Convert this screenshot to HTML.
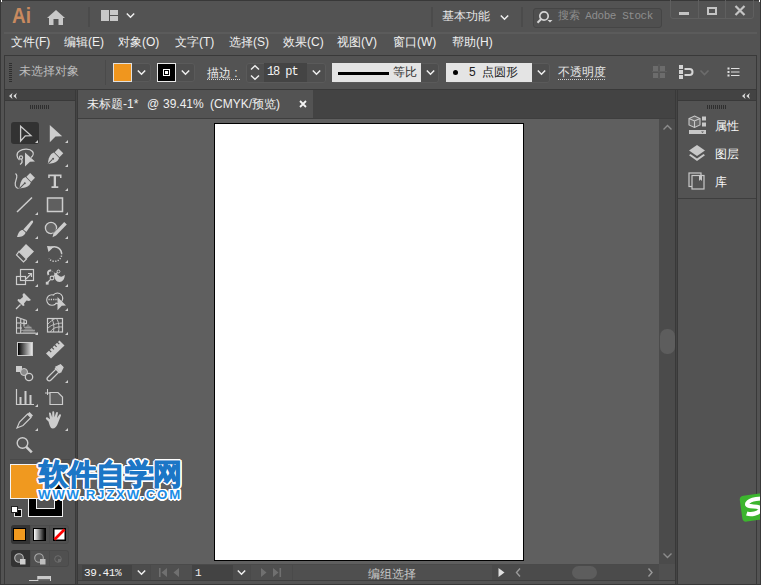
<!DOCTYPE html>
<html><head><meta charset="utf-8">
<style>
*{margin:0;padding:0;box-sizing:border-box}
html,body{width:761px;height:585px;overflow:hidden;background:#535353}
body{position:relative;font-family:"Liberation Sans",sans-serif;color:#e6e6e6}
.a{position:absolute}
.t{position:absolute;white-space:nowrap;font-size:12px;line-height:14px}
</style></head><body>
<!-- window frame -->
<div class="a" style="left:0;top:0;width:761px;height:585px;background:#535353"></div>


<div class="a" style="left:0;top:0;width:761px;height:1px;background:#383838"></div><div class="a" style="left:0;top:0;width:2px;height:2px;background:#fff"></div><div class="a" style="left:759px;top:0;width:2px;height:2px;background:#fff"></div>
<!-- title bar -->
<div class="t" style="left:12px;top:4px;font-size:22px;line-height:23px;font-weight:bold;color:#c88a5f;transform:scaleX(0.86);transform-origin:left">Ai</div>
<svg class="a" style="left:46px;top:9px" width="20" height="17" viewBox="0 0 20 17"><path d="M1 9 L10 1 L19 9 L17 9 L17 16 L12.5 16 L12.5 10 L7.5 10 L7.5 16 L3 16 L3 9 Z" fill="#c8c8c8"/></svg>
<div class="a" style="left:88px;top:7px;width:2px;height:20px;background:#4b4b4b"></div>
<div class="a" style="left:101px;top:10px;width:8px;height:11px;background:#c8c8c8"></div>
<div class="a" style="left:110px;top:10px;width:8px;height:5px;background:#c8c8c8"></div>
<div class="a" style="left:110px;top:16px;width:8px;height:5px;background:#c8c8c8"></div>
<svg class="a" style="left:125px;top:12px" width="11" height="7" viewBox="0 0 11 7"><path d="M1.8 1.5 L5.5 5.2 L9.2 1.5" fill="none" stroke="#f0f0f0" stroke-width="1.5"/></svg>
<div class="a" style="left:431px;top:7px;width:2px;height:20px;background:#4b4b4b"></div>
<div class="t" style="left:442px;top:9px;font-size:12px;color:#e8e8e8">基本功能</div>
<svg class="a" style="left:499px;top:14px" width="11" height="7" viewBox="0 0 11 7"><path d="M1.8 1.5 L5.5 5.2 L9.2 1.5" fill="none" stroke="#f0f0f0" stroke-width="1.5"/></svg>
<div class="a" style="left:521px;top:7px;width:2px;height:20px;background:#4b4b4b"></div>
<div class="a" style="left:533px;top:8px;width:129px;height:20px;border:1px solid #454545;border-radius:3px;background:#4f4f4f"></div>
<svg class="a" style="left:535px;top:9px" width="20" height="16" viewBox="0 0 20 16"><circle cx="9" cy="7" r="4.2" fill="none" stroke="#d4d4d4" stroke-width="1.7"/><path d="M6.2 10 L2.5 13.8" stroke="#d4d4d4" stroke-width="2"/><path d="M12.5 11 L17.5 11 L15 13.5Z" fill="#d4d4d4"/></svg>
<div class="t" style="left:558px;top:9px;font-size:11px;letter-spacing:-0.45px;color:#8e8e8e;font-family:'Liberation Mono',monospace">搜索 Adobe Stock</div>
<div class="a" style="left:670px;top:-3px;width:84px;height:22px;border:1px solid #5f5f5f;border-radius:3px"></div>
<div class="a" style="left:698px;top:0;width:1px;height:19px;background:#5f5f5f"></div>
<div class="a" style="left:725px;top:0;width:1px;height:19px;background:#5f5f5f"></div>
<div class="a" style="left:679px;top:12px;width:10px;height:3px;background:#c4c4c4"></div>
<div class="a" style="left:707px;top:7px;width:10px;height:8px;border:2px solid #c4c4c4"></div>
<svg class="a" style="left:734px;top:5px" width="12" height="11" viewBox="0 0 12 11"><path d="M1.5 1 L10.5 10 M10.5 1 L1.5 10" stroke="#c4c4c4" stroke-width="2.2"/></svg>
<div class="a" style="left:4px;top:32px;width:753px;height:2px;background:#5b5b5b"></div>
<!-- menu -->
<div class="t" style="left:11px;top:35px;color:#f0f0f0">文件(F)</div>
<div class="t" style="left:64px;top:35px;color:#f0f0f0">编辑(E)</div>
<div class="t" style="left:118px;top:35px;color:#f0f0f0">对象(O)</div>
<div class="t" style="left:175px;top:35px;color:#f0f0f0">文字(T)</div>
<div class="t" style="left:229px;top:35px;color:#f0f0f0">选择(S)</div>
<div class="t" style="left:283px;top:35px;color:#f0f0f0">效果(C)</div>
<div class="t" style="left:337px;top:35px;color:#f0f0f0">视图(V)</div>
<div class="t" style="left:393px;top:35px;color:#f0f0f0">窗口(W)</div>
<div class="t" style="left:452px;top:35px;color:#f0f0f0">帮助(H)</div>
<!-- control bar -->
<div class="a" style="left:4px;top:55px;width:753px;height:35px;border:1px solid #393939;background:#535353"></div>
<div class="a" style="left:9px;top:63px;width:3px;height:20px;background:repeating-linear-gradient(#2e2e2e 0 1px,transparent 1px 2px)"></div>
<div class="t" style="left:19px;top:64px;color:#bdbdbd">未选择对象</div>
<div class="a" style="left:105px;top:60px;width:1px;height:25px;background:#4a4a4a"></div>
<div class="a" style="left:113px;top:63px;width:38px;height:19px;border-radius:3px;background:#4e4e4e;border:1px solid #5a5a5a"></div>
<div class="a" style="left:113px;top:63px;width:19px;height:19px;background:#f0961e;border:1px solid #e0e0e0"></div>
<svg class="a" style="left:136px;top:69px" width="11" height="7" viewBox="0 0 11 7"><path d="M1.8 1.5 L5.5 5.2 L9.2 1.5" fill="none" stroke="#f0f0f0" stroke-width="1.5"/></svg>
<div class="a" style="left:157px;top:63px;width:38px;height:19px;border-radius:3px;background:#4e4e4e;border:1px solid #5a5a5a"></div>
<div class="a" style="left:157px;top:63px;width:19px;height:19px;background:#000;border:1px solid #e8e8e8"></div>
<div class="a" style="left:163px;top:69px;width:7px;height:7px;border:1px solid #fff"></div>
<div class="a" style="left:165px;top:71px;width:3px;height:3px;background:#fff"></div>
<svg class="a" style="left:180px;top:69px" width="11" height="7" viewBox="0 0 11 7"><path d="M1.8 1.5 L5.5 5.2 L9.2 1.5" fill="none" stroke="#f0f0f0" stroke-width="1.5"/></svg>
<div class="t" style="left:207px;top:66px;color:#ececec">描边 :</div>
<div class="a" style="left:207px;top:79px;width:34px;height:1px;background:repeating-linear-gradient(90deg,#cfcfcf 0 1px,transparent 1px 2px)"></div>
<div class="a" style="left:246px;top:63px;width:80px;height:20px;border-radius:3px;background:#4e4e4e;border:1px solid #5a5a5a"></div>
<div class="a" style="left:264px;top:63px;width:43px;height:19px;background:#444"></div>
<svg class="a" style="left:249px;top:64px" width="12" height="17" viewBox="0 0 12 17"><path d="M2 5.5 L6 1.8 L10 5.5 M2 11.5 L6 15.2 L10 11.5" fill="none" stroke="#eee" stroke-width="1.5"/></svg>
<div class="t" style="left:267px;top:65px;font-family:'Liberation Mono',monospace;font-size:12px;letter-spacing:-1.1px;color:#f4f4f4">18 pt</div>
<svg class="a" style="left:311px;top:69px" width="11" height="7" viewBox="0 0 11 7"><path d="M1.8 1.5 L5.5 5.2 L9.2 1.5" fill="none" stroke="#f0f0f0" stroke-width="1.5"/></svg>
<div class="a" style="left:332px;top:63px;width:107px;height:20px;border-radius:3px;background:#4e4e4e;border:1px solid #5a5a5a"></div>
<div class="a" style="left:332px;top:63px;width:89px;height:19px;background:#e4e4e4"></div>
<div class="a" style="left:338px;top:72px;width:51px;height:3px;background:#000"></div>
<div class="t" style="left:393px;top:65px;color:#303030">等比</div>
<svg class="a" style="left:425px;top:69px" width="11" height="7" viewBox="0 0 11 7"><path d="M1.8 1.5 L5.5 5.2 L9.2 1.5" fill="none" stroke="#f0f0f0" stroke-width="1.5"/></svg>
<div class="a" style="left:446px;top:63px;width:104px;height:20px;border-radius:3px;background:#4e4e4e;border:1px solid #5a5a5a"></div>
<div class="a" style="left:446px;top:63px;width:86px;height:19px;background:#e4e4e4"></div>
<div class="a" style="left:453px;top:70px;width:5px;height:5px;border-radius:50%;background:#000"></div>
<div class="t" style="left:469px;top:65px;color:#202020">5 &nbsp;点圆形</div>
<svg class="a" style="left:536px;top:69px" width="11" height="7" viewBox="0 0 11 7"><path d="M1.8 1.5 L5.5 5.2 L9.2 1.5" fill="none" stroke="#f0f0f0" stroke-width="1.5"/></svg>
<div class="t" style="left:558px;top:65px;color:#e6e6e6">不透明度</div>
<div class="a" style="left:558px;top:79px;width:48px;height:1px;background:repeating-linear-gradient(90deg,#cfcfcf 0 1px,transparent 1px 2px)"></div>
<svg class="a" style="left:652px;top:64px" width="15" height="15" viewBox="0 0 15 15"><rect x="1" y="2" width="5" height="5" fill="#6c6c6c"/><rect x="8" y="2" width="5" height="5" fill="#6c6c6c"/><rect x="1" y="9" width="5" height="5" fill="#6c6c6c"/><rect x="8" y="9" width="5" height="5" fill="#6c6c6c"/><path d="M7 0 V15 M0 7.5 H15" stroke="#5e5e5e" stroke-width="1"/></svg>
<svg class="a" style="left:678px;top:64px" width="18" height="16" viewBox="0 0 18 16"><rect x="1" y="1" width="4" height="4" fill="#d4d4d4"/><rect x="1" y="6" width="4" height="4" fill="#d4d4d4"/><rect x="1" y="11" width="4" height="4" fill="#d4d4d4"/><path d="M6.5 5 H11.5 A3 3 0 0 1 11.5 11 H6.5" fill="none" stroke="#d4d4d4" stroke-width="2"/></svg>
<svg class="a" style="left:699px;top:69px" width="11" height="7" viewBox="0 0 11 7"><path d="M1.5 1.5 L5.5 5.5 L9.5 1.5" fill="none" stroke="#6c6c6c" stroke-width="1.6"/></svg>
<svg class="a" style="left:727px;top:67px" width="13" height="10" viewBox="0 0 13 10"><rect x="0.5" y="0.5" width="2" height="2" fill="#e0e0e0"/><rect x="0.5" y="4" width="2" height="2" fill="#e0e0e0"/><rect x="0.5" y="7.5" width="2" height="2" fill="#e0e0e0"/><path d="M4 1.5 H12.5 M4 5 H12.5 M4 8.5 H12.5" stroke="#e0e0e0" stroke-width="1.2"/></svg>
<!-- left panel -->
<div class="a" style="left:4px;top:90px;width:72px;height:494px;background:#535353;border-left:1px solid #3a3a3a;border-right:1px solid #393939"></div>
<div class="a" style="left:5px;top:90px;width:70px;height:11px;background:#434343;border-bottom:1px solid #393939"></div>
<svg class="a" style="left:9px;top:93px" width="9" height="6" viewBox="0 0 9 6"><path d="M3.5 0 L0 3 L3.5 6 L2.6 3Z M7.8 0 L4.3 3 L7.8 6 L6.9 3Z" fill="#dcdcdc"/></svg>
<div class="a" style="left:30px;top:105px;width:19px;height:4px;background:repeating-linear-gradient(90deg,#2e2e2e 0 1px,transparent 1px 2px)"></div>
<div class="a" style="left:76px;top:90px;width:1px;height:494px;background:#444"></div><div class="a" style="left:77px;top:90px;width:1px;height:494px;background:#393939"></div>
<!-- tools -->
<div class="a" style="left:11px;top:122px;width:28px;height:22px;border-radius:3px;background:#323232"></div>
<svg class="a" style="left:15px;top:121px" width="26" height="24" viewBox="15 121 26 24"><path d="M20.6 126.3 L31 135.6 L25.3 135.9 L20.6 141 Z" fill="none" stroke="#cdcdcd" stroke-width="1.3" stroke-linejoin="miter"/><path d="M38 140 L38 143 L35 143Z" fill="#cdcdcd"/></svg>
<svg class="a" style="left:45px;top:121px" width="26" height="24" viewBox="45 121 26 24"><path d="M49.8 125 L62.2 136.2 L55.5 136.4 L49.8 142.2 Z" fill="#cdcdcd"/><path d="M68 140 L68 143 L65 143Z" fill="#cdcdcd"/></svg>
<svg class="a" style="left:14px;top:146px" width="26" height="24" viewBox="14 146 26 24"><path d="M19.5 160 C16.5 158 16 153 19.5 151 C23 148.5 30 148.5 32.5 151.5 C34 153.5 33 156 31 157.5" fill="none" stroke="#cdcdcd" stroke-width="1.3"/><circle cx="21" cy="157.5" r="1.6" fill="none" stroke="#cdcdcd" stroke-width="1.2"/><path d="M21.5 159 C22.5 161 22.5 163 20 164.5" fill="none" stroke="#cdcdcd" stroke-width="1.3"/><path d="M25 152.5 L35 161.5 L30 161.8 L25 166.5Z" fill="#cdcdcd"/></svg>
<svg class="a" style="left:44px;top:146px" width="26" height="24" viewBox="44 146 26 24"><g transform="translate(47.8,164) rotate(45)"><path d="M0 0 C-2.5 -3 -4.6 -6.5 -4.6 -9.5 L-3.8 -12.3 L3.8 -12.3 L4.6 -9.5 C4.6 -6.5 2.5 -3 0 0Z" fill="#cdcdcd"/><rect x="-3.4" y="-18.5" width="6.8" height="5.4" fill="#cdcdcd"/><path d="M0 -0.5 V-6.5" stroke="#535353" stroke-width="1"/><circle cx="0" cy="-7.5" r="1" fill="#535353"/></g><path d="M68 164 L68 167 L65 167Z" fill="#cdcdcd"/></svg>
<svg class="a" style="left:12px;top:170px" width="26" height="24" viewBox="12 170 26 24"><path d="M15.5 173.5 C17.5 175 17 177.5 16 180 C14.5 184 15 188 18.5 188.5" fill="none" stroke="#cdcdcd" stroke-width="1.2"/><g transform="translate(19.5,188.5) rotate(45)"><path d="M0 0 C-2.5 -3 -4.6 -6.5 -4.6 -9.5 L-3.8 -12.3 L3.8 -12.3 L4.6 -9.5 C4.6 -6.5 2.5 -3 0 0Z" fill="#cdcdcd"/><rect x="-3.4" y="-18.5" width="6.8" height="5.4" fill="#cdcdcd"/><path d="M0 -0.5 V-6.5" stroke="#535353" stroke-width="1"/><circle cx="0" cy="-7.5" r="1" fill="#535353"/></g></svg>
<svg class="a" style="left:44px;top:170px" width="26" height="24" viewBox="44 170 26 24"><path d="M48.2 174.5 H61.5 V178 H60 V176.3 H56 V186.3 H58.3 V188 H51.5 V186.3 H53.7 V176.3 H49.7 V178 H48.2 Z" fill="#cdcdcd"/><path d="M68 188 L68 191 L65 191Z" fill="#cdcdcd"/></svg>
<svg class="a" style="left:12px;top:194px" width="28" height="22" viewBox="12 194 28 22"><path d="M17 212 L32 197.5" stroke="#cdcdcd" stroke-width="1.5"/><path d="M38 212 L38 215 L35 215Z" fill="#cdcdcd"/></svg>
<svg class="a" style="left:44px;top:194px" width="26" height="22" viewBox="44 194 26 22"><rect x="47.5" y="198" width="15" height="13.5" fill="#5f5f5f" stroke="#cdcdcd" stroke-width="1.5"/><path d="M68 212 L68 215 L65 215Z" fill="#cdcdcd"/></svg>
<svg class="a" style="left:12px;top:218px" width="28" height="24" viewBox="12 218 28 24"><path d="M32.2 220.5 C33.3 220.8 33.3 222 32.8 222.8 L26.3 232 L23.3 229.5 L31 221 C31.4 220.6 31.8 220.4 32.2 220.5 Z" fill="#cdcdcd"/><path d="M22.8 230 C20 230 18.3 232.5 17 237 C21.5 237 24.8 235.8 25.5 232.5 Z" fill="#cdcdcd"/><path d="M38 236 L38 239 L35 239Z" fill="#cdcdcd"/></svg>
<svg class="a" style="left:42px;top:218px" width="28" height="24" viewBox="42 218 28 24"><circle cx="51" cy="228" r="5.6" fill="#646464" stroke="#cdcdcd" stroke-width="1.3"/><path d="M65.5 223.5 L53.5 236.5" stroke="#535353" stroke-width="5.5"/><path d="M64.2 222 L66.8 224.6 L56 235.6 L52.5 237.3 L53.5 233.3 Z" fill="#cdcdcd"/><path d="M68 236 L68 239 L65 239Z" fill="#cdcdcd"/></svg>
<svg class="a" style="left:12px;top:242px" width="28" height="22" viewBox="12 242 28 22"><path d="M26 244 L34 251.5 L26.5 259 L19 251.5 Z" fill="#cdcdcd"/><path d="M19 251.5 L26.5 259 L23.5 262 L16.5 255 Z" fill="none" stroke="#cdcdcd" stroke-width="1.2"/><path d="M38 260 L38 263 L35 263Z" fill="#cdcdcd"/></svg>
<svg class="a" style="left:42px;top:242px" width="28" height="22" viewBox="42 242 28 22"><path d="M49.5 249 A7 7 0 0 1 61.5 253" fill="none" stroke="#cdcdcd" stroke-width="1.6"/><path d="M61.5 253 A7 7 0 0 1 49 258.5" fill="none" stroke="#cdcdcd" stroke-width="1.5" stroke-dasharray="1.2 1.4"/><path d="M47 246 L54 246.5 L48.5 252 Z" fill="#cdcdcd"/><path d="M68 260 L68 263 L65 263Z" fill="#cdcdcd"/></svg>
<svg class="a" style="left:12px;top:266px" width="28" height="22" viewBox="12 266 28 22"><rect x="16.5" y="276.5" width="9" height="8" fill="none" stroke="#cdcdcd" stroke-width="1.2"/><rect x="20.5" y="269.5" width="13" height="11" fill="none" stroke="#cdcdcd" stroke-width="1.2"/><path d="M26 279 L31 274 M28 273.5 H31.5 V277" fill="none" stroke="#cdcdcd" stroke-width="1.2"/><path d="M38 284 L38 287 L35 287Z" fill="#cdcdcd"/></svg>
<svg class="a" style="left:42px;top:266px" width="28" height="22" viewBox="42 266 28 22"><path d="M50 271 C52.5 270 54.5 272 54.5 275 C54.5 279 56 282 59.5 282 C62.5 282 64.8 279 64.8 274.8 C63.3 276.3 61.8 277 60 276.5 C58 275.5 57 273.5 55 273 C54 272.5 52.5 270.5 50 271 Z" fill="#cdcdcd"/><path d="M48.5 275 C47 272.5 48.5 270 51 270.5" fill="none" stroke="#cdcdcd" stroke-width="2"/><path d="M47.5 282.5 L58.5 271.5" stroke="#cdcdcd" stroke-width="1.1"/><circle cx="52" cy="278" r="1.9" fill="#535353" stroke="#cdcdcd" stroke-width="1.1"/><rect x="45.8" y="281.8" width="2.8" height="2.8" fill="#cdcdcd"/><circle cx="58.5" cy="271.5" r="1.4" fill="#535353" stroke="#cdcdcd" stroke-width="1"/><path d="M68 284 L68 287 L65 287Z" fill="#cdcdcd"/></svg>
<svg class="a" style="left:12px;top:290px" width="28" height="22" viewBox="12 290 28 22"><path d="M24 293 L31 300 L29 301 L26.5 300.5 L24 303.5 L24.5 305.5 L23 306 L17.5 300.5 L18 299 L20 299.5 L23 297 L22.5 294.5 Z" fill="#cdcdcd"/><path d="M16 309 L20.5 304.5" stroke="#cdcdcd" stroke-width="1.3"/><path d="M38 308 L38 311 L35 311Z" fill="#cdcdcd"/></svg>
<svg class="a" style="left:42px;top:290px" width="28" height="22" viewBox="42 290 28 22"><circle cx="52" cy="300" r="5.2" fill="none" stroke="#cdcdcd" stroke-width="1.3"/><circle cx="57.5" cy="298.3" r="5.2" fill="none" stroke="#cdcdcd" stroke-width="1.3"/><circle cx="52" cy="300" r="4.5" fill="#535353"/><circle cx="57.5" cy="298.3" r="4.5" fill="#535353"/><path d="M48.5 299.5 H58" stroke="#cdcdcd" stroke-width="1.3" stroke-dasharray="1.2 1.1"/><path d="M57.5 297 L66 305.5 L61.8 305.7 L57.5 310.3 Z" fill="#cdcdcd"/><path d="M68 308 L68 311 L65 311Z" fill="#cdcdcd"/></svg>
<svg class="a" style="left:12px;top:314px" width="28" height="22" viewBox="12 314 28 22"><path d="M22 333 L28 324 L36 333 Z" fill="#7a7a7a"/><path d="M16.5 317 L26.5 320.5 M16.5 317 V333.3 H37.5 M16.5 322.8 L26.5 323.6 M16.5 328 L22 328 M20.7 318.3 V333 M24 319.5 V326.5 M26.5 320.5 V324" fill="none" stroke="#cdcdcd" stroke-width="1.1"/><path d="M21 330.3 H35 M24 327.3 H31.5" stroke="#a8a8a8" stroke-width="1"/><path d="M38 332 L38 335 L35 335Z" fill="#cdcdcd"/></svg>
<svg class="a" style="left:42px;top:314px" width="28" height="22" viewBox="42 314 28 22"><rect x="47.5" y="318.5" width="15" height="13.5" fill="none" stroke="#cdcdcd" stroke-width="1.2"/><path d="M47.5 324.5 C50 321.5 53 320 55 318.5 M47.5 328.5 C51 325 55 323.5 62.5 323 M50.5 332 C52 328.5 56 326.5 62.5 327 M52 319 C53.5 322 54.5 326 53.5 332 M56.5 318.5 C58.5 321.5 59.5 325.5 58.5 332" fill="none" stroke="#cdcdcd" stroke-width="0.9"/><path d="M68 332 L68 335 L65 335Z" fill="#cdcdcd"/></svg>
<div class="a" style="left:17px;top:342px;width:16px;height:14px;border:1px solid #cdcdcd;background:linear-gradient(90deg,#000,#e8e8e8)"></div>
<svg class="a" style="left:42px;top:338px" width="28" height="22" viewBox="42 338 28 22"><path d="M46 353.5 L59.5 340.5 L64.5 345.5 L51 358.5 Z" fill="#cdcdcd"/><path d="M49 349.8 L51.2 352 M51.7 347.2 L53.9 349.4 M54.4 344.6 L56.6 346.8 M57.1 342 L59.3 344.2" stroke="#535353" stroke-width="1.2"/></svg>
<svg class="a" style="left:12px;top:362px" width="28" height="22" viewBox="12 362 28 22"><rect x="16" y="366" width="6" height="6" fill="#cdcdcd"/><circle cx="24" cy="372" r="3.5" fill="#8a8a8a" stroke="#cdcdcd" stroke-width="1"/><circle cx="29" cy="377" r="3.7" fill="#535353" stroke="#cdcdcd" stroke-width="1.3"/></svg>
<svg class="a" style="left:42px;top:362px" width="28" height="22" viewBox="42 362 28 22"><path d="M47.5 380 C46.5 379 47 378 48 377 L56 369 L59 372 L51 380 C50 381 48.5 381 47.5 380Z" fill="none" stroke="#cdcdcd" stroke-width="1.2"/><path d="M56 367 L60.5 364.8 L63 367.3 L60.8 371.8 Z M55 368 L60 373" fill="#cdcdcd" stroke="#cdcdcd" stroke-width="1.3"/><path d="M68 380 L68 383 L65 383Z" fill="#cdcdcd"/></svg>
<svg class="a" style="left:12px;top:386px" width="28" height="22" viewBox="12 386 28 22"><path d="M16.5 389 V404.5 H34" fill="none" stroke="#cdcdcd" stroke-width="1.2"/><path d="M20.5 397 V404 M25.5 391 V404 M30.5 395 V404" stroke="#cdcdcd" stroke-width="2"/><path d="M38 404 L38 407 L35 407Z" fill="#cdcdcd"/></svg>
<svg class="a" style="left:42px;top:386px" width="28" height="22" viewBox="42 386 28 22"><path d="M45 393 H50 M47.5 389 V395" stroke="#cdcdcd" stroke-width="1"/><path d="M50 392.5 H58 L62.5 397 V404.5 H50 Z" fill="#5f5f5f" stroke="#cdcdcd" stroke-width="1.2"/></svg>
<svg class="a" style="left:12px;top:410px" width="28" height="22" viewBox="12 410 28 22"><path d="M17 428 L19.5 422 L27.5 414 L31 417.5 L23 425.5 Z" fill="none" stroke="#cdcdcd" stroke-width="1.2"/><path d="M27.5 414 L29.5 412 L33 415.5 L31 417.5 Z" fill="#cdcdcd"/><path d="M38 428 L38 431 L35 431Z" fill="#cdcdcd"/></svg>
<svg class="a" style="left:42px;top:410px" width="28" height="22" viewBox="42 410 28 22"><path d="M48.5 421.5 L46.2 419.3 C45.2 418.3 46.3 416.8 47.6 417.6 L50 419.2 L49 413.8 C48.7 412.5 50.5 412 50.9 413.4 L52.2 417.5 L52.3 412.2 C52.3 410.9 54.2 410.9 54.2 412.2 L54.5 417.3 L56 412.8 C56.4 411.5 58.2 412 57.9 413.3 L57 418 L59.2 414.8 C60 413.8 61.5 414.7 60.8 415.9 L58 423 C57 426.5 55 428.5 52.5 428.5 C50.5 428.5 49.5 425 48.5 421.5 Z" fill="#cdcdcd"/><path d="M68 428 L68 431 L65 431Z" fill="#cdcdcd"/></svg>
<svg class="a" style="left:12px;top:434px" width="28" height="22" viewBox="12 434 28 22"><circle cx="22.5" cy="443" r="5.3" fill="none" stroke="#cdcdcd" stroke-width="1.4"/><path d="M26.3 446.8 L31.8 452.3" stroke="#cdcdcd" stroke-width="2.6"/></svg>
<!-- /tools -->
<!-- doc tab bar -->
<div class="a" style="left:78px;top:90px;width:597px;height:28px;background:#434343"></div>
<div class="a" style="left:78px;top:90px;width:235px;height:28px;background:#535353"></div>
<div class="a" style="left:78px;top:118px;width:597px;height:1px;background:#3e3e3e"></div>
<div class="t" style="left:87px;top:97px;color:#f0f0f0">未标题-1*</div>
<div class="t" style="left:147px;top:97px;color:#f0f0f0">@</div>
<div class="t" style="left:163px;top:97px;color:#f0f0f0">39.41%</div>
<div class="t" style="left:210px;top:97px;color:#f0f0f0">(CMYK/预览)</div>
<svg class="a" style="left:299px;top:100px" width="8" height="8" viewBox="0 0 8 8"><path d="M1 1 L7 7 M7 1 L1 7" stroke="#f4f4f4" stroke-width="1.8"/></svg>
<!-- canvas -->
<div class="a" style="left:78px;top:119px;width:581px;height:445px;background:#5f5f5f"></div>
<div class="a" style="left:214px;top:123px;width:310px;height:438px;background:#fff;border:1px solid #000"></div>
<!-- v scrollbar -->
<div class="a" style="left:659px;top:119px;width:16px;height:445px;background:#4b4b4b"></div>
<div class="a" style="left:660px;top:329px;width:15px;height:25px;border-radius:7px;background:#5d5d5d"></div>
<svg class="a" style="left:662px;top:124px" width="11" height="7" viewBox="0 0 11 7"><path d="M1.5 5.5 L5.5 1.5 L9.5 5.5" fill="none" stroke="#8c8c8c" stroke-width="1.4"/></svg>
<svg class="a" style="left:662px;top:552px" width="11" height="7" viewBox="0 0 11 7"><path d="M1.5 1.5 L5.5 5.5 L9.5 1.5" fill="none" stroke="#8c8c8c" stroke-width="1.4"/></svg>
<div class="a" style="left:675px;top:90px;width:3px;height:494px;background:#393939"></div><div class="a" style="left:676px;top:90px;width:1px;height:494px;background:#444"></div>
<!-- status -->
<div class="a" style="left:78px;top:564px;width:597px;height:16px;background:#4a4a4a"></div>
<div class="a" style="left:78px;top:580px;width:597px;height:5px;background:#535353;border-top:1px solid #3e3e3e"></div>
<div class="a" style="left:82px;top:565px;width:50px;height:15px;background:#434343"></div>
<div class="t" style="left:84px;top:566px;font-family:'Liberation Mono',monospace;font-size:11px;letter-spacing:-0.4px;color:#f4f4f4">39.41%</div>
<div class="a" style="left:132px;top:565px;width:18px;height:15px;background:#4c4c4c"></div>
<svg class="a" style="left:136px;top:569px" width="11" height="7" viewBox="0 0 11 7"><path d="M1.8 1.5 L5.5 5.2 L9.2 1.5" fill="none" stroke="#f0f0f0" stroke-width="1.5"/></svg>
<div class="a" style="left:151px;top:565px;width:41px;height:15px;background:#4f4f4f"></div>
<svg class="a" style="left:158px;top:567px" width="30" height="11" viewBox="0 0 30 11"><rect x="1" y="1" width="1.6" height="9" fill="#707070"/><path d="M9 1 L3.5 5.5 L9 10Z M21 1 L15.5 5.5 L21 10Z" fill="#707070"/></svg>
<div class="a" style="left:192px;top:565px;width:41px;height:15px;background:#434343"></div>
<div class="t" style="left:195px;top:566px;font-family:'Liberation Mono',monospace;font-size:11px;color:#f0f0f0">1</div>
<div class="a" style="left:233px;top:565px;width:17px;height:15px;background:#4c4c4c"></div>
<svg class="a" style="left:236px;top:569px" width="11" height="7" viewBox="0 0 11 7"><path d="M1.8 1.5 L5.5 5.2 L9.2 1.5" fill="none" stroke="#f0f0f0" stroke-width="1.5"/></svg>
<div class="a" style="left:251px;top:565px;width:41px;height:15px;background:#4f4f4f"></div>
<svg class="a" style="left:258px;top:567px" width="30" height="11" viewBox="0 0 30 11"><path d="M3 1 L8.5 5.5 L3 10Z M15 1 L20.5 5.5 L15 10Z" fill="#707070"/><rect x="21.5" y="1" width="1.6" height="9" fill="#707070"/></svg>
<div class="a" style="left:293px;top:565px;width:199px;height:15px;background:#4f4f4f"></div>
<div class="t" style="left:368px;top:567px;color:#c8c8c8">编组选择</div>
<svg class="a" style="left:497px;top:567px" width="9" height="11" viewBox="0 0 9 11"><path d="M1.5 1 L7.5 5.5 L1.5 10Z" fill="#e0e0e0"/></svg>
<div class="a" style="left:510px;top:565px;width:149px;height:15px;background:#4b4b4b"></div>
<svg class="a" style="left:515px;top:567px" width="7" height="11" viewBox="0 0 7 11"><path d="M5 1.5 L1.5 5.5 L5 9.5" fill="none" stroke="#9a9a9a" stroke-width="1.4"/></svg>
<svg class="a" style="left:647px;top:567px" width="7" height="11" viewBox="0 0 7 11"><path d="M1.5 1.5 L5 5.5 L1.5 9.5" fill="none" stroke="#9a9a9a" stroke-width="1.4"/></svg>
<div class="a" style="left:572px;top:566px;width:25px;height:13px;border-radius:7px;background:#5d5d5d"></div>
<div class="a" style="left:659px;top:564px;width:16px;height:16px;background:#505050"></div>
<!-- right panel -->
<div class="a" style="left:678px;top:90px;width:79px;height:494px;background:#535353;border-right:1px solid #393939"></div>
<div class="a" style="left:678px;top:90px;width:78px;height:11px;background:#434343;border-bottom:1px solid #393939"></div>
<svg class="a" style="left:742px;top:93px" width="9" height="6" viewBox="0 0 9 6"><path d="M3.5 0 L0 3 L3.5 6 L2.6 3Z M7.8 0 L4.3 3 L7.8 6 L6.9 3Z" fill="#dcdcdc"/></svg>
<div class="a" style="left:707px;top:105px;width:19px;height:4px;background:repeating-linear-gradient(90deg,#2e2e2e 0 1px,transparent 1px 2px)"></div>
<div class="a" style="left:678px;top:198px;width:78px;height:1px;background:#3e3e3e"></div>
<div class="t" style="left:715px;top:119px;color:#fafafa">属性</div>
<div class="t" style="left:715px;top:147px;color:#fafafa">图层</div>
<div class="t" style="left:715px;top:175px;color:#fafafa">库</div>
<div class="a" style="left:757px;top:90px;width:3px;height:494px;background:#535353"></div>
<!-- swatches -->
<div class="a" style="left:10px;top:459px;width:60px;height:1px;background:#4a4a4a"></div>
<div class="a" style="left:28px;top:482px;width:35px;height:35px;background:#000;border:1px solid #f0f0f0"></div>
<div class="a" style="left:36px;top:490px;width:19px;height:19px;background:#535353;border:1px solid #f0f0f0"></div>
<div class="a" style="left:10px;top:464px;width:35px;height:35px;background:#f0991f;border:1px solid #f4f4f4"></div>
<div class="a" style="left:14px;top:509px;width:8px;height:8px;background:#000;border:1px solid #e0e0e0"></div>
<div class="a" style="left:11px;top:506px;width:7px;height:7px;background:#fff;border:1px solid #222"></div>
<div class="a" style="left:11px;top:525px;width:58px;height:19px;border-radius:3px;background:#505050;border:1px solid #4a4a4a"></div>
<div class="a" style="left:11px;top:525px;width:19px;height:19px;border-radius:3px 0 0 3px;background:#333"></div>
<div class="a" style="left:30px;top:526px;width:1px;height:17px;background:#4a4a4a"></div>
<div class="a" style="left:49px;top:526px;width:1px;height:17px;background:#4a4a4a"></div>
<div class="a" style="left:13px;top:528px;width:13px;height:13px;background:#f0991f;border:1.5px solid #000"></div>
<div class="a" style="left:33px;top:528px;width:13px;height:13px;background:linear-gradient(90deg,#fff,#000);border:1.5px solid #000"></div>
<svg class="a" style="left:53px;top:528px" width="13" height="13" viewBox="0 0 13 13"><rect x="0.75" y="0.75" width="11.5" height="11.5" fill="#fff" stroke="#000" stroke-width="1.5"/><path d="M1.5 11.5 L11.5 1.5" stroke="#f00" stroke-width="2.6"/></svg>
<div class="a" style="left:11px;top:550px;width:58px;height:17px;border-radius:3px;background:#505050;border:1px solid #4a4a4a"></div>
<div class="a" style="left:11px;top:550px;width:19px;height:17px;border-radius:3px 0 0 3px;background:#333"></div>
<div class="a" style="left:30px;top:551px;width:1px;height:15px;background:#4a4a4a"></div>
<div class="a" style="left:49px;top:551px;width:1px;height:15px;background:#4a4a4a"></div>
<svg class="a" style="left:13px;top:552px" width="55" height="14" viewBox="0 0 55 14"><circle cx="6" cy="6" r="4.3" fill="#5a5a5a" stroke="#b8b8b8" stroke-width="1.1"/><rect x="7" y="7" width="5.5" height="5.5" fill="#cfcfcf"/><circle cx="26" cy="6" r="4.3" fill="#5a5a5a" stroke="#a8a8a8" stroke-width="1.1"/><rect x="27" y="7" width="5.5" height="5.5" fill="#bdbdbd"/><circle cx="45" cy="7" r="3.3" fill="none" stroke="#6c6c6c" stroke-width="1"/><rect x="45" y="7" width="3" height="3" fill="#6c6c6c"/></svg>
<svg class="a" style="left:28px;top:575px" width="24" height="8" viewBox="0 0 24 8"><path d="M1 5.5 H10" stroke="#d0d0d0" stroke-width="1"/><rect x="9.5" y="1" width="13.5" height="3" fill="#c8c8c8"/><rect x="9.5" y="1" width="1" height="5" fill="#d0d0d0"/><rect x="22" y="1" width="1" height="5" fill="#d0d0d0"/><rect x="10.5" y="4" width="11.5" height="1.5" fill="#6a6a6a"/></svg>
<!-- right panel icons -->
<svg class="a" style="left:688px;top:115px" width="20" height="21" viewBox="0 0 20 21"><path d="M6.5 1 L12 3.5 L12 10 L6.5 12.5 L1 10 L1 3.5 Z" fill="#6a6a6a" stroke="#c8c8c8" stroke-width="1.1"/><path d="M1 3.5 L6.5 6 L12 3.5 M6.5 6 V12.5" fill="none" stroke="#c8c8c8" stroke-width="1.1"/><rect x="14" y="1.5" width="4" height="4" fill="#c8c8c8"/><rect x="14" y="7.5" width="4" height="4" fill="#c8c8c8"/><rect x="1" y="15" width="17" height="4" fill="#c8c8c8"/><path d="M13 16.5 H16 L14.5 18Z" fill="#535353"/></svg>
<svg class="a" style="left:688px;top:144px" width="20" height="19" viewBox="0 0 20 19"><path d="M9 1 L17 6.5 L9 12 L1 6.5 Z" fill="#c8c8c8"/><path d="M2.5 10 L9 14.5 L15.5 10 L17 11.2 L9 17 L1 11.2 Z" fill="#c8c8c8"/></svg>
<svg class="a" style="left:688px;top:172px" width="19" height="18" viewBox="0 0 19 18"><rect x="1" y="1" width="12" height="13.5" fill="none" stroke="#c8c8c8" stroke-width="1.2"/><rect x="4" y="3.5" width="12" height="13.5" fill="#535353" stroke="#c8c8c8" stroke-width="1.2"/><path d="M11 3.5 V9 L12.5 7.5 L14 9 V3.5" fill="#c8c8c8"/></svg>
<!-- watermark -->
<div class="t" style="left:39px;top:457px;font-size:29px;line-height:34px;font-weight:900;color:#1c76c6;-webkit-text-stroke:1.1px #1c76c6;letter-spacing:-0.4px;text-shadow:2.00px 0.00px 0 #fff,1.85px 0.77px 0 #fff,1.41px 1.41px 0 #fff,0.77px 1.85px 0 #fff,0.00px 2.00px 0 #fff,-0.77px 1.85px 0 #fff,-1.41px 1.41px 0 #fff,-1.85px 0.77px 0 #fff,-2.00px 0.00px 0 #fff,-1.85px -0.77px 0 #fff,-1.41px -1.41px 0 #fff,-0.77px -1.85px 0 #fff,-0.00px -2.00px 0 #fff,0.77px -1.85px 0 #fff,1.41px -1.41px 0 #fff,1.85px -0.77px 0 #fff">软件自学网</div>
<div class="t" style="left:38px;top:488px;font-size:13px;line-height:14px;font-weight:bold;color:#1b8de6;letter-spacing:1.75px;transform:scaleX(1.02);transform-origin:left;text-shadow:1.50px 0.00px 0 #fff,1.30px 0.75px 0 #fff,0.75px 1.30px 0 #fff,0.00px 1.50px 0 #fff,-0.75px 1.30px 0 #fff,-1.30px 0.75px 0 #fff,-1.50px 0.00px 0 #fff,-1.30px -0.75px 0 #fff,-0.75px -1.30px 0 #fff,-0.00px -1.50px 0 #fff,0.75px -1.30px 0 #fff,1.30px -0.75px 0 #fff">WWW.RJZXW.COM</div>
<!-- green logo -->
<svg class="a" style="left:738px;top:491px" width="23" height="34" viewBox="0 0 23 34"><g transform="rotate(-8 12 17)"><rect x="3" y="4" width="30" height="26" rx="4" fill="#3cb52e"/><path d="M30 11 C25 8 13 8 10 12 C7 17 24 15 22 20 C20 24 12 24 8 22" fill="none" stroke="#fff" stroke-width="4.2"/></g></svg>
<!-- frame -->
<div class="a" style="left:0;top:0;width:1px;height:585px;background:#383838"></div><div class="a" style="left:0;top:584px;width:761px;height:1px;background:#383838"></div><div class="a" style="left:760px;top:0;width:1px;height:585px;background:#383838"></div>
</body></html>
